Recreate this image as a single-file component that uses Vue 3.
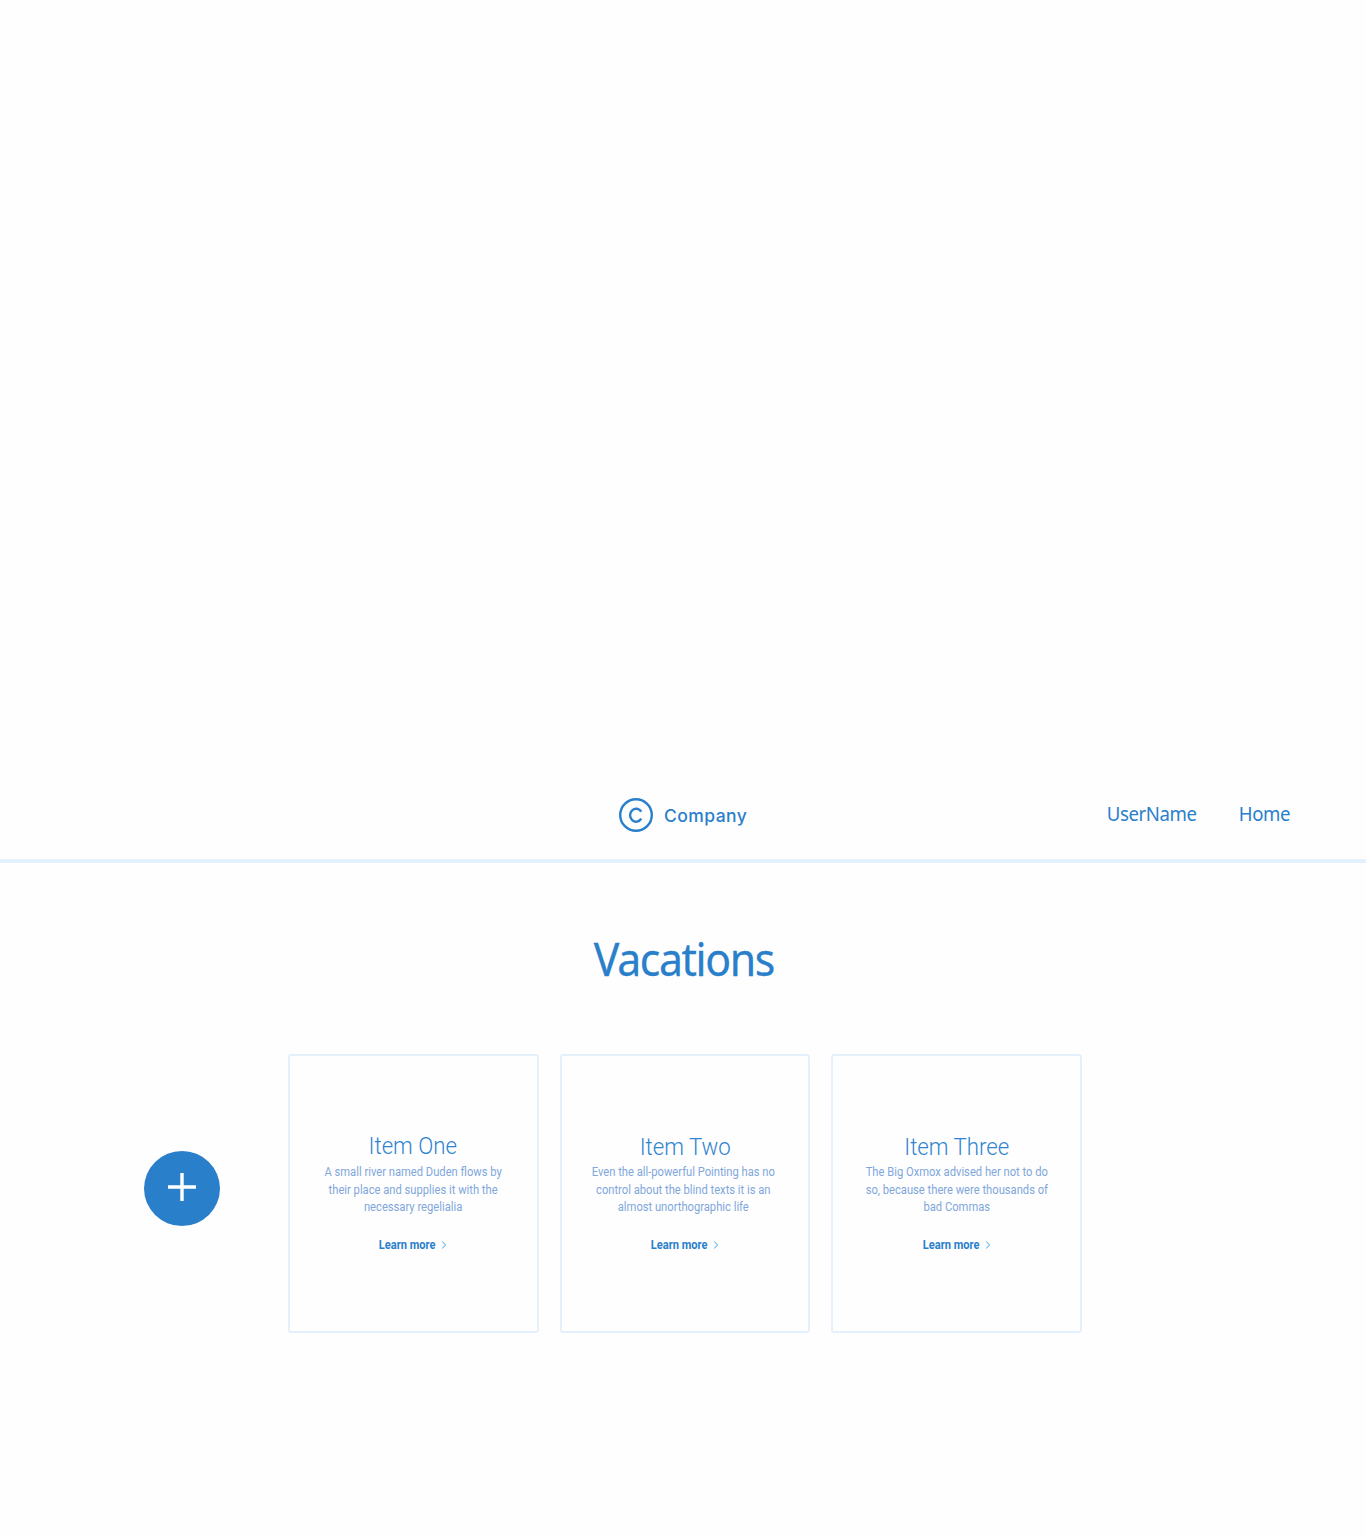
<script setup>
const links = ['UserName', 'Home']
const items = [
  {
    title: 'Item One',
    variant: 'first',
    lines: ['A small river named Duden flows by', 'their place and supplies it with the', 'necessary regelialia'],
  },
  {
    title: 'Item Two',
    variant: 'second',
    lines: ['Even the all-powerful Pointing has no', 'control about the blind texts it is an', 'almost unorthographic life'],
  },
  {
    title: 'Item Three',
    variant: 'third',
    lines: ['The Big Oxmox advised her not to do', 'so, because there were thousands of', 'bad Commas'],
  },
]
</script>

<template>
  <div class="page">
    <header class="header">
      <div class="brand">
        <svg class="logo" viewBox="0 0 34 34" fill="none" stroke="currentColor">
          <circle cx="17" cy="17" r="15.8" stroke-width="2.4" />
          <path d="M22.3 13.7A6.1 6.5 0 1 0 22.3 20.7" stroke-width="2.4" />
        </svg>
        <span class="brand-name">Company</span>
      </div>
      <nav class="nav">
        <a v-for="link in links" :key="link" class="nav-link">{{ link }}</a>
      </nav>
    </header>

    <main class="main">
      <h1 class="heading"><span class="heading-text">Vacations</span></h1>
      <div class="row">
        <button class="add" aria-label="Add">
          <svg viewBox="0 0 28 28" width="28" height="28" stroke="#fff" stroke-width="3.4">
            <path d="M14 0V28M0 14H28" />
          </svg>
        </button>
        <section class="cards">
          <article v-for="item in items" :key="item.title" class="card" :class="item.variant">
            <h2 class="title">{{ item.title }}</h2>
            <p class="text">
              <span v-for="line in item.lines" :key="line" class="line">{{ line }}</span>
            </p>
            <a class="more">
              <span>Learn more</span>
              <svg viewBox="0 0 5 8" width="5" height="8" fill="none" stroke="#3f9be8" stroke-width="1">
                <path d="M.5 .4L4.2 4L.5 7.6" />
              </svg>
            </a>
          </article>
        </section>
      </div>
    </main>
  </div>
</template>

<style>
body {
  background: #fefefe;
}
</style>

<style scoped>
.page {
  min-height: 1536px;
  background: #fefefe;
  color: #2a7fcb;
  font-family: "Noto Sans", sans-serif;
}
.header {
  box-sizing: border-box;
  height: 863px;
  padding: 0 76px 27px 0;
  border-bottom: 4px solid #e4f1fc;
  display: grid;
  grid-template-columns: 619px auto 1fr;
  align-items: end;
}
.brand {
  grid-column: 2;
  display: flex;
  align-items: center;
  gap: 11px;
  height: 34px;
}
.logo {
  width: 34px;
  height: 34px;
}
.brand-name {
  padding-top: 2px;
  font: 500 17.5px/32px "Inter", sans-serif;
  letter-spacing: 0.45px;
}
.nav {
  display: flex;
  justify-content: flex-end;
  gap: 38px;
  height: 34px;
}
.nav-link {
  font-size: 20px;
  line-height: 32px;
  letter-spacing: -0.45px;
  transform: scaleX(0.93);
  transform-origin: right;
}
.heading {
  margin: 0;
  padding-top: 65px;
  height: 126px;
  text-align: center;
  font-weight: 400;
  font-size: 46px;
  line-height: 60px;
}
.heading-text {
  display: inline-block;
  padding-left: 1px;
  letter-spacing: -1.5px;
  transform: scaleX(0.93);
  -webkit-text-stroke: 0.3px currentColor;
}
.row {
  display: flex;
  padding-left: 144px;
  gap: 68px;
}
.add {
  width: 76px;
  height: 75px;
  margin-top: 97px;
  padding: 0 0 4px;
  border: 0;
  border-radius: 50%;
  background: #2a7fcb;
  display: flex;
  align-items: center;
  justify-content: center;
}
.cards {
  display: flex;
  gap: 21px;
}
.card {
  box-sizing: border-box;
  width: 250.6px;
  height: 279px;
  padding-top: 75px;
  border: 2px solid #e4f1fc;
  border-radius: 3px;
  display: flex;
  flex-direction: column;
  align-items: center;
  font-family: Roboto, sans-serif;
}
.title {
  margin: 0 0 1px;
  font-weight: 300;
  font-size: 24px;
  line-height: 32px;
  color: #2f84d0;
  transform: scaleX(0.925);
}
.first .title {
  margin: -1px 1px 2px 0;
}
.text {
  margin: 0;
  text-align: center;
  font-size: 12px;
  line-height: 17.5px;
  color: #7fa7dc;
  transform: scaleX(0.932);
}
.second .text {
  margin-right: 4px;
}
.line {
  display: block;
  white-space: nowrap;
}
.more {
  margin-top: 19px;
  display: flex;
  align-items: center;
  gap: 7px;
  font-weight: 700;
  font-size: 12px;
  line-height: 18px;
  transform: scaleX(0.925);
}
.first .more {
  margin-right: 1px;
}
</style>
